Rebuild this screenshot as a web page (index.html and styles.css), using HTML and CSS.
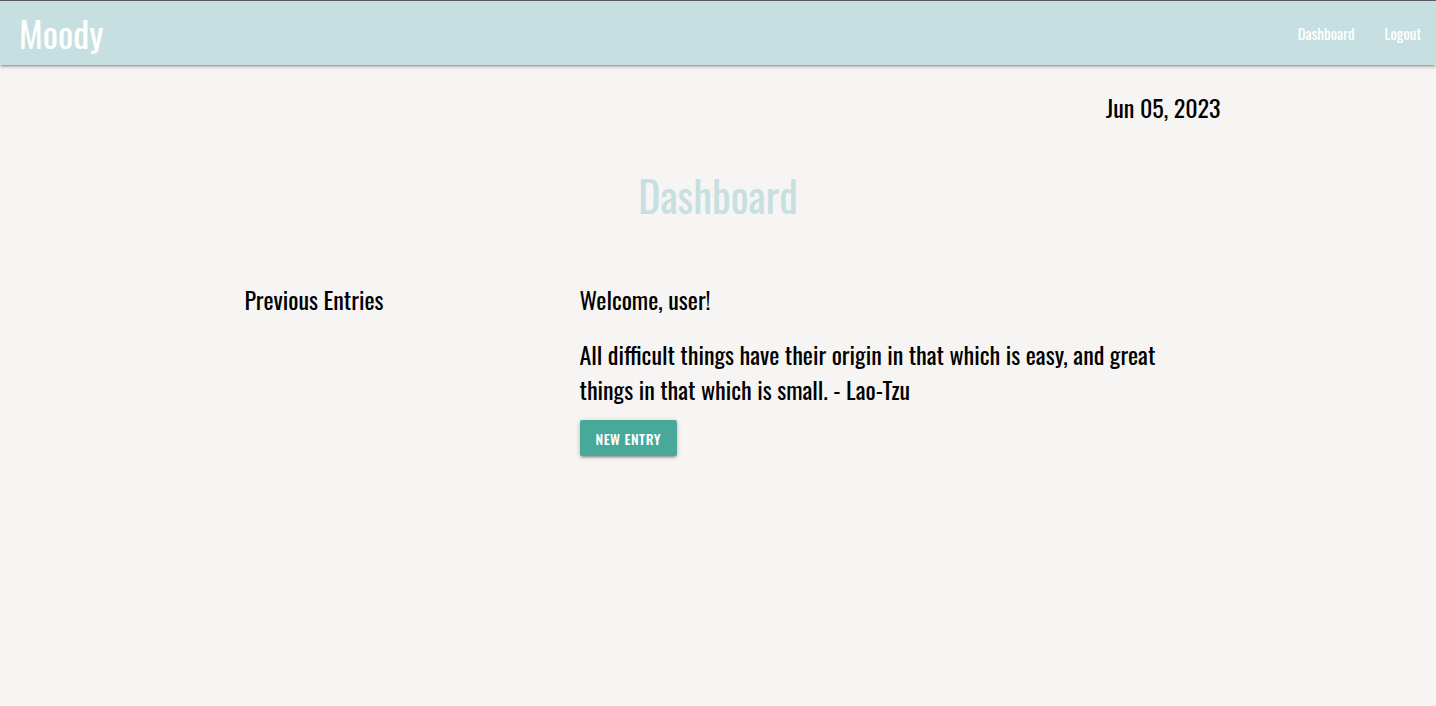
FILE: index.html
```html
<!DOCTYPE html>
<html lang="en">
<head>
<meta charset="utf-8">
<title>Moody</title>
<link rel="stylesheet" href="styles.css">
</head>
<body>
<nav class="nav">
  <a class="brand" href="#">Moody</a>
  <ul class="nav-links">
    <li><a href="#">Dashboard</a></li>
    <li><a href="#">Logout</a></li>
  </ul>
</nav>
<main class="container">
  <div class="date">Jun 05, 2023</div>
  <h1 class="title">Dashboard</h1>
  <div class="row">
    <section class="col-left">
      <h2 class="subhead">Previous Entries</h2>
    </section>
    <section class="col-right">
      <h2 class="subhead">Welcome, user!</h2>
      <p class="quote">All difficult things have their origin in that which is easy, and great things in that which is small. - Lao-Tzu</p>
      <button class="btn" type="button">New Entry</button>
    </section>
  </div>
</main>
</body>
</html>
```
FILE: styles.css
```css
* { box-sizing: border-box; }
html, body { margin: 0; padding: 0; }
body {
  background: #f6f5f4;
  font-family: "Oswald", "Liberation Sans Narrow", sans-serif;
  color: #000;
  min-height: 706px;
}
.nav {
  height: 65px;
  border-top: 1px solid #5a5a5a;
  background: #c6dfe0;
  display: flex;
  align-items: center;
  justify-content: space-between;
  padding-left: 19px;
  box-shadow: 0 2px 2px 0 rgba(0,0,0,0.14), 0 3px 1px -2px rgba(0,0,0,0.12), 0 1px 5px 0 rgba(0,0,0,0.2);
}
.brand {
  color: #fff;
  text-decoration: none;
  font-size: 36px;
  line-height: 1;
}
.nav-links {
  list-style: none;
  margin: 0;
  padding: 0;
  display: flex;
}
.nav-links a {
  display: block;
  padding: 0 15px;
  color: #fff;
  text-decoration: none;
  font-size: 15px;
  line-height: 64px;
}
.container {
  width: 1005px;
  margin: 0 auto;
}
.date {
  text-align: right;
  font-size: 24px;
  line-height: 36px;
  margin-top: 24px;
}
.title {
  text-align: center;
  color: #c6dfe0;
  font-size: 42px;
  font-weight: 400;
  line-height: 60px;
  margin: 40px 0 56px;
}
.row {
  display: flex;
  padding-left: 29px;
}
.col-left { width: 335px; }
.col-right { width: 600px; }
.subhead {
  font-size: 24px;
  font-weight: 400;
  line-height: 36px;
  margin: 0;
}
.quote {
  font-size: 24px;
  line-height: 35px;
  margin: 20px 0 13px;
}
.btn {
  height: 36px;
  padding: 0 16px;
  border: none;
  border-radius: 2px;
  background: #48a89a;
  color: #fff;
  font-family: "Oswald", sans-serif;
  font-size: 14px;
  font-weight: 500;
  letter-spacing: 0.5px;
  text-transform: uppercase;
  box-shadow: 0 2px 2px 0 rgba(0,0,0,0.14), 0 3px 1px -2px rgba(0,0,0,0.12), 0 1px 5px 0 rgba(0,0,0,0.2);
}
```
